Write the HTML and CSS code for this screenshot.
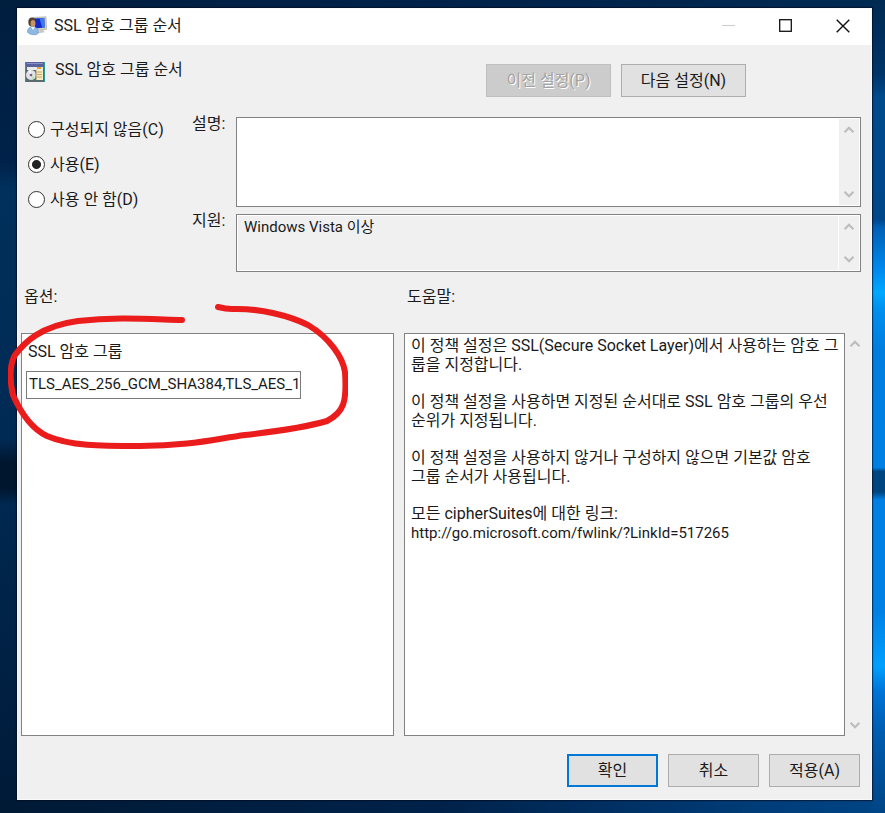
FILE: index.html
```html
<!DOCTYPE html>
<html lang="ko">
<head>
    <meta charset="utf-8">
    <title>SSL 암호 그룹 순서</title>
    <link rel="stylesheet" href="styles.css">
</head>
<body>
    <svg width="0" height="0" class="symbols">
        <symbol id="up" viewBox="0 0 10 8"><path d="M0.5 6.2 5 1.7l4.500 4.500" fill="none" stroke="#bdbdbd" stroke-width="2.200"/></symbol>
        <symbol id="down" viewBox="0 0 10 8"><path d="M0.5 1.800 5 6.300l4.500-4.500" fill="none" stroke="#bdbdbd" stroke-width="2.200"/></symbol>
    </svg>

    <div class="window">
        <div class="titlebar">
            <svg class="icon" viewBox="0 0 20 20">
                <path d="M6 1.500 19 .8l.6 12.400L8 14.500z" fill="#d5d3c8" stroke="#aaa99f" stroke-width=".7"/>
                <path d="M7 2.600 17.300 2l.4 9.500-9.700 1z" fill="#1427c8"/>
                <path d="M12.500 2.300 17.300 2l.4 9.500-2.500.3z" fill="#3c78ee"/>
                <path d="M13 14h3l2 2.200-7 1z" fill="#c9c9c2"/>
                <ellipse cx="5" cy="6" rx="3.700" ry="4.500" fill="#54402e"/>
                <ellipse cx="6" cy="7.500" rx="2.400" ry="3.500" fill="#c99468"/>
                <path d="M.5 16c0-4 2.500-5.500 5-5 3.500-.2 6 2 6 6-1.500 2.500-9 2.500-11-1z" fill="#8db8e2" stroke="#6c9bcb" stroke-width=".7"/>
                <path d="M4 11l2 3 2-3z" fill="#e6f2fb"/>
            </svg>
            <span class="title">SSL 암호 그룹 순서</span>
            <button class="caption" aria-label="최소화" disabled><svg width="13" height="13" viewBox="0 0 13 13"><path d="M0 6.500h13" stroke="#cfcfcf" stroke-width="1.200"/></svg></button>
            <button class="caption" aria-label="최대화"><svg width="13" height="13" viewBox="0 0 13 13"><rect x=".7" y=".7" width="11.600" height="11.600" fill="none" stroke="#111" stroke-width="1.300"/></svg></button>
            <button class="caption" aria-label="닫기"><svg width="14" height="14" viewBox="0 0 14 14"><path d="M.7.7l12.600 12.600M13.300.7.7 13.300" stroke="#111" stroke-width="1.400"/></svg></button>
        </div>

        <div class="header">
            <div class="policy">
                <svg class="icon" viewBox="0 0 20 20">
                    <rect width="20" height="20" fill="#59696c"/>
                    <path d="M0 0h1v20H0zM19 0h1v20h-1z" fill="#2e9990"/>
                    <rect x="1" width="18" height="5" fill="#58639d"/>
                    <rect x="2" y="1" width="16" height="1" fill="#8990c4"/>
                    <rect x="2" y="5" width="16" height="3" fill="#e9ebe8"/>
                    <rect x="12" y="5" width="4" height="2" fill="#e7a52c"/>
                    <circle cx="6" cy="13" r="5" fill="#dfe3e8"/>
                    <path d="M6 13 3 8.500a5 5 0 0 1 3-.5z" fill="#f5f7ff"/>
                    <path d="M6 13l4 3a5 5 0 0 1-3 2z" fill="#bde2bd"/>
                    <circle cx="6" cy="13" r="1.300" fill="#76607d"/>
                    <path d="M11 8h7v10h-7z" fill="#f5ebc7"/>
                    <path d="M12 10h5M12 12.500h5M12 15h5" stroke="#c9a45c"/>
                    <path d="M11 8v10" stroke="#9c8754"/>
                </svg>
                <span>SSL 암호 그룹 순서</span>
            </div>
            <div class="nav">
                <button class="btn nav-btn" disabled>이전 설정(P)</button>
                <button class="btn nav-btn">다음 설정(N)</button>
            </div>
        </div>

        <div class="settings">
            <div class="states">
                <label><input type="radio" name="state">구성되지 않음(C)</label>
                <label><input type="radio" name="state" checked>사용(E)</label>
                <label><input type="radio" name="state">사용 안 함(D)</label>
            </div>
            <label class="field-label" for="comment">설명:</label>
            <div class="box comment">
                <textarea id="comment"></textarea>
                <div class="scroll"><svg><use href="#up"/></svg><svg><use href="#down"/></svg></div>
            </div>
            <label class="field-label" for="supported">지원:</label>
            <div class="box supported">
                <textarea id="supported" readonly>Windows Vista 이상</textarea>
                <div class="scroll"><svg><use href="#up"/></svg><svg><use href="#down"/></svg></div>
            </div>
        </div>

        <div class="panels">
            <div class="heading">옵션:</div>
            <div class="heading">도움말:</div>
            <div class="panel options">
                <label for="suites">SSL 암호 그룹</label>
                <input type="text" id="suites" value="TLS_AES_256_GCM_SHA384,TLS_AES_128_GCM_SHA256">
                <svg class="marker" width="340" height="146" viewBox="8 303 340 146">
                    <path d="M182 320C145 319 115 317 78 321C40 326 24 343 15 355C9 365 10 383 13 395C20 411 30 428 47 436C70 446 100 446 140 446C190 446 215 439 245 435C280 431 310 426 327 421C344 412 347 402 345 372C343 358 330 338 308 325C290 316 260 308 232 309C226 309 222 308 218 307" fill="none" stroke="#ea1c1c" stroke-width="6" stroke-linecap="round" stroke-linejoin="round"/>
                </svg>
            </div>
            <div class="help">
                <div class="panel help-text">
                    <p>이 정책 설정은 SSL(Secure Socket Layer)에서 사용하는 암호 그<br>룹을 지정합니다.</p>
                    <p>이 정책 설정을 사용하면 지정된 순서대로 SSL 암호 그룹의 우선<br>순위가 지정됩니다.</p>
                    <p>이 정책 설정을 사용하지 않거나 구성하지 않으면 기본값 암호<br>그룹 순서가 사용됩니다.</p>
                    <p>모든 cipherSuites에 대한 링크:<br><span class="url">http://go.microsoft.com/fwlink/?LinkId=517265</span></p>
                </div>
                <div class="scroll"><svg><use href="#up"/></svg><svg><use href="#down"/></svg></div>
            </div>
        </div>

        <div class="footer">
            <button class="btn primary">확인</button>
            <button class="btn">취소</button>
            <button class="btn">적용(A)</button>
        </div>
    </div>
</body>
</html>
```
FILE: styles.css
```css
* {
    box-sizing: border-box;
}
body {
    display: flex;
    min-height: 100vh;
    margin: 0;
    padding: 8px 13px 13px 17px;
    font-family: Roboto, "Noto Sans CJK KR", sans-serif;
    font-size: 16px;
    line-height: 19px;
    color: #1a1a1a;
    background:
        linear-gradient(#002a52 0, #003468 9%, #004a8c 12%, #00478a 27%, #0060b4 28%, #0088ee 33%, #00a8ff 36%, #0090f0 38%, #007ee0 43%, #0080e4 57.500%, #004480 58%, #004480 60.500%, #0080e4 61.500%, #007fe4 75%, #00a0ff 82%, #0074d8 85%, #005cb0 90%, #004585 100%) right / 13px 100% no-repeat,
        linear-gradient(90deg, #001a35, #00224a 50%, #003c78 85%, #004585) bottom / 100% 13px no-repeat,
        linear-gradient(90deg, #001e3e, #00224a 50%, #002a52) top / 100% 8px no-repeat,
        linear-gradient(#001e3e 0, #00224a 20%, #00305c 23%, #002a54 54%, #00152e 57%, #00152e 60%, #002850 62%, #001a38 100%);
}
button,
input,
textarea {
    font: inherit;
    color: inherit;
}
svg {
    display: block;
}
.symbols {
    position: absolute;
}
.window {
    display: flex;
    flex: 1;
    flex-direction: column;
    min-width: 0;
    background: #f0f0f0;
    border: 1px solid #f8f8f8;
    box-shadow: 0 0 1px 1px rgba(0, 10, 30, 0.6);
}
.icon {
    flex: none;
    width: 20px;
    height: 20px;
}

/* title bar */
.titlebar {
    display: flex;
    align-items: center;
    height: 36px;
    padding-left: 9px;
    padding-bottom: 3px;
    background: #fff;
}
.title {
    flex: 1;
    padding-left: 7px;
}
.caption {
    display: flex;
    align-items: center;
    justify-content: center;
    width: 57px;
    height: 33px;
    padding: 0;
    background: none;
    border: 0;
}

/* policy name and navigation */
.header {
    display: flex;
    padding: 19px 0 20px 7px;
}
.policy {
    display: flex;
    flex: 1;
    align-items: flex-start;
    gap: 10px;
    height: 33px;
    line-height: 12px;
}
.policy .icon {
    margin-top: -2px;
}
.nav {
    display: flex;
    gap: 10px;
    margin-right: 125px;
}
.btn {
    width: 91px;
    height: 33px;
    padding: 0;
    background: #e1e1e1;
    border: 1px solid #adadad;
}
.btn:disabled {
    color: #a3a3a3;
    text-shadow: 1px 1px 0 #fff;
    background: #ccc;
    border-color: #bfbfbf;
}
.nav-btn {
    width: 125px;
}
.btn.primary {
    border: 2px solid #0078d7;
}

/* state, comment and supported-on */
.settings {
    display: grid;
    grid-template-columns: 154px 34px 1fr;
    grid-template-rows: 90px 58px;
    gap: 7px 10px;
    padding: 0 10px;
}
.states {
    grid-row: span 2;
    display: flex;
    flex-direction: column;
    gap: 16px;
    padding-top: 3px;
}
.states label {
    display: flex;
    align-items: center;
    gap: 5px;
    white-space: nowrap;
}
.states input {
    appearance: none;
    flex: none;
    width: 17px;
    height: 17px;
    margin: 0;
    background: #fff;
    border: 1px solid #333;
    border-radius: 50%;
}
.states input:checked {
    background: radial-gradient(circle, #222 4px, #fff 5px);
}
.field-label {
    margin-top: -3px;
    white-space: nowrap;
}
.box {
    display: flex;
    padding: 1px;
    background: #fff;
    border: 1px solid #828282;
}
.box textarea {
    flex: 1;
    min-width: 0;
    padding: 2px 6px;
    font-size: 15px;
    background: none;
    border: 0;
    outline: 0;
    resize: none;
    overflow: hidden;
}
.supported textarea {
    background: #f0f0f0;
}
.scroll {
    display: flex;
    flex: none;
    flex-direction: column;
    justify-content: space-between;
    align-items: center;
    width: 20px;
    padding: 7px 0;
    background: #f0f0f0;
}
.scroll svg {
    width: 10px;
    height: 8px;
}
.supported .scroll {
    margin-left: 1px;
}

/* options and help */
.panels {
    display: grid;
    flex: 1;
    grid-template-columns: 373fr 461fr;
    grid-template-rows: auto 1fr;
    column-gap: 10px;
    padding: 15px 6px 0 3px;
}
.heading {
    height: 46px;
    padding-left: 3px;
}
.panel {
    background: #fff;
    border: 1px solid #828282;
}
.options {
    position: relative;
    display: flex;
    flex-direction: column;
    align-items: flex-start;
    gap: 10px;
    padding: 8px 4px;
}
.options label {
    padding-left: 2px;
}
.options input {
    width: 275px;
    height: 28px;
    padding: 0 2px 2px;
    font-size: 15px;
    border: 1px solid #7a7a7a;
    outline: 0;
}
/* hand-drawn ring over the cipher suite field */
.marker {
    position: absolute;
    top: -31px;
    left: -14px;
    pointer-events: none;
}
.help {
    display: flex;
}
.help-text {
    flex: 1;
    padding: 2px 4px 2px 6px;
}
.help-text p {
    margin: 0 0 18px;
}
.url {
    font-size: 15px;
}

/* dialog buttons */
.footer {
    display: flex;
    justify-content: flex-end;
    gap: 10px;
    padding: 18px 11px 12px;
}
```
